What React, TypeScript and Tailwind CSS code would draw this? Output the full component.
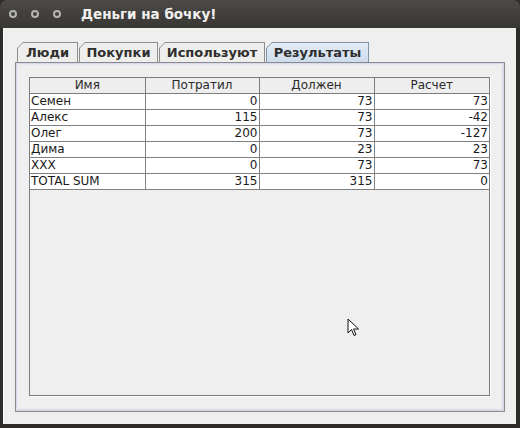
const rows: [string, number, number, number][] = [
  ["Семен", 0, 73, 73],
  ["Алекс", 115, 73, -42],
  ["Олег", 200, 73, -127],
  ["Дима", 0, 23, 23],
  ["XXX", 0, 73, 73],
  ["TOTAL SUM", 315, 315, 0],
];

const headers = ["Имя", "Потратил", "Должен", "Расчет"];

function Tab({ label, width, active }: { label: string; width: string; active?: boolean }) {
  return (
    <div
      className={`${width} h-[20px] pt-[1px] pl-[1px] pr-[1px] ${active ? "bg-[#8193ab]" : "bg-[#8e8e8e]"} [clip-path:polygon(6px_0,100%_0,100%_100%,0_100%,0_6px)]`}
    >
      <div
        className={`h-full flex items-center justify-center text-[13px] font-bold text-[#2e2e2e] ${
          active ? "bg-gradient-to-b from-[#e4ecf6] to-[#cfdcec]" : "bg-[#eeeeec]"
        } [clip-path:polygon(5px_0,100%_0,100%_100%,0_100%,0_5px)]`}
      >
        {label}
      </div>
    </div>
  );
}

export default function App() {
  return (
    <div className="w-[520px] h-[428px] bg-[#2d2c29] relative overflow-hidden font-['DejaVu_Sans',sans-serif]">
      {/* title bar */}
      <div className="h-[28px] rounded-t-[7px] bg-gradient-to-b from-[#4b4a46] to-[#383733] flex items-center pl-[9px]">
        <div className="flex gap-[14px]">
          <span className="w-[8px] h-[8px] rounded-full border-[2px] border-[#b5b4ae]" />
          <span className="w-[8px] h-[8px] rounded-full border-[2px] border-[#b5b4ae]" />
          <span className="w-[8px] h-[8px] rounded-full border-[2px] border-[#b5b4ae]" />
        </div>
        <span className="ml-[20px] text-[13.5px] font-bold text-[#f2f1ef]">Деньги на бочку!</span>
      </div>

      {/* window body */}
      <div className="ml-[3px] mr-[4px] h-[396px] bg-[#efefef] border-l border-[#f8f8f8] pt-[14px] px-[11px] pb-[12px] flex flex-col">
        <div className="flex pl-[2px] gap-[1px]">
          <Tab label="Люди" width="w-[61px]" />
          <Tab label="Покупки" width="w-[79px]" />
          <Tab label="Используют" width="w-[106px]" />
          <Tab label="Результаты" width="w-[103px]" active />
        </div>

        <div className="flex-1 border border-[#8a8a8a] shadow-[inset_1px_1px_0_#d8d8ee,inset_-1px_-1px_0_#d8d8ee,inset_2px_2px_0_#e8e8f4,inset_-2px_-2px_0_#dadae6] pt-[14px] pl-[13px] pr-[14px] pb-[15px] flex">
          <div className="flex-1 border border-[#7c7c7c] shadow-[1px_1px_0_#ffffff] bg-[#efefef]">
            <table className="border-collapse table-fixed w-[459px] text-[12px] leading-[15px] text-[#1a1a1a]">
              <colgroup>
                <col className="w-[115px]" />
                <col className="w-[114px]" />
                <col className="w-[115px]" />
                <col className="w-[115px]" />
              </colgroup>
              <thead>
                <tr className="h-[15px]">
                  {headers.map((h, i) => (
                    <th
                      key={h}
                      className={`font-normal text-center text-[#2a2a2a] bg-[#eeeeee] border-b border-[#7c7c7c] ${
                        i < 3 ? "border-r" : ""
                      } border-[#7c7c7c] p-0`}
                    >
                      {h}
                    </th>
                  ))}
                </tr>
              </thead>
              <tbody className="bg-white">
                {rows.map((r) => (
                  <tr key={r[0]} className="h-[16px]">
                    <td className="border-r border-b border-[#808080] px-[1px] py-0 text-left">{r[0]}</td>
                    <td className="border-r border-b border-[#808080] px-[1px] py-0 text-right">{r[1]}</td>
                    <td className="border-r border-b border-[#808080] px-[1px] py-0 text-right">{r[2]}</td>
                    <td className="border-b border-[#808080] px-[1px] py-0 text-right">{r[3]}</td>
                  </tr>
                ))}
              </tbody>
            </table>
          </div>
        </div>
      </div>

      {/* mouse cursor */}
      <svg className="absolute left-[347px] top-[318px]" width="13" height="20" viewBox="0 0 13 20">
        <path
          d="M1 1 L1 15 L4.5 11.5 L7 17.5 L9 16.7 L6.6 11 L11.5 11 Z"
          fill="#ffffff"
          stroke="#111111"
          strokeWidth="1"
          strokeLinejoin="miter"
        />
      </svg>
    </div>
  );
}
